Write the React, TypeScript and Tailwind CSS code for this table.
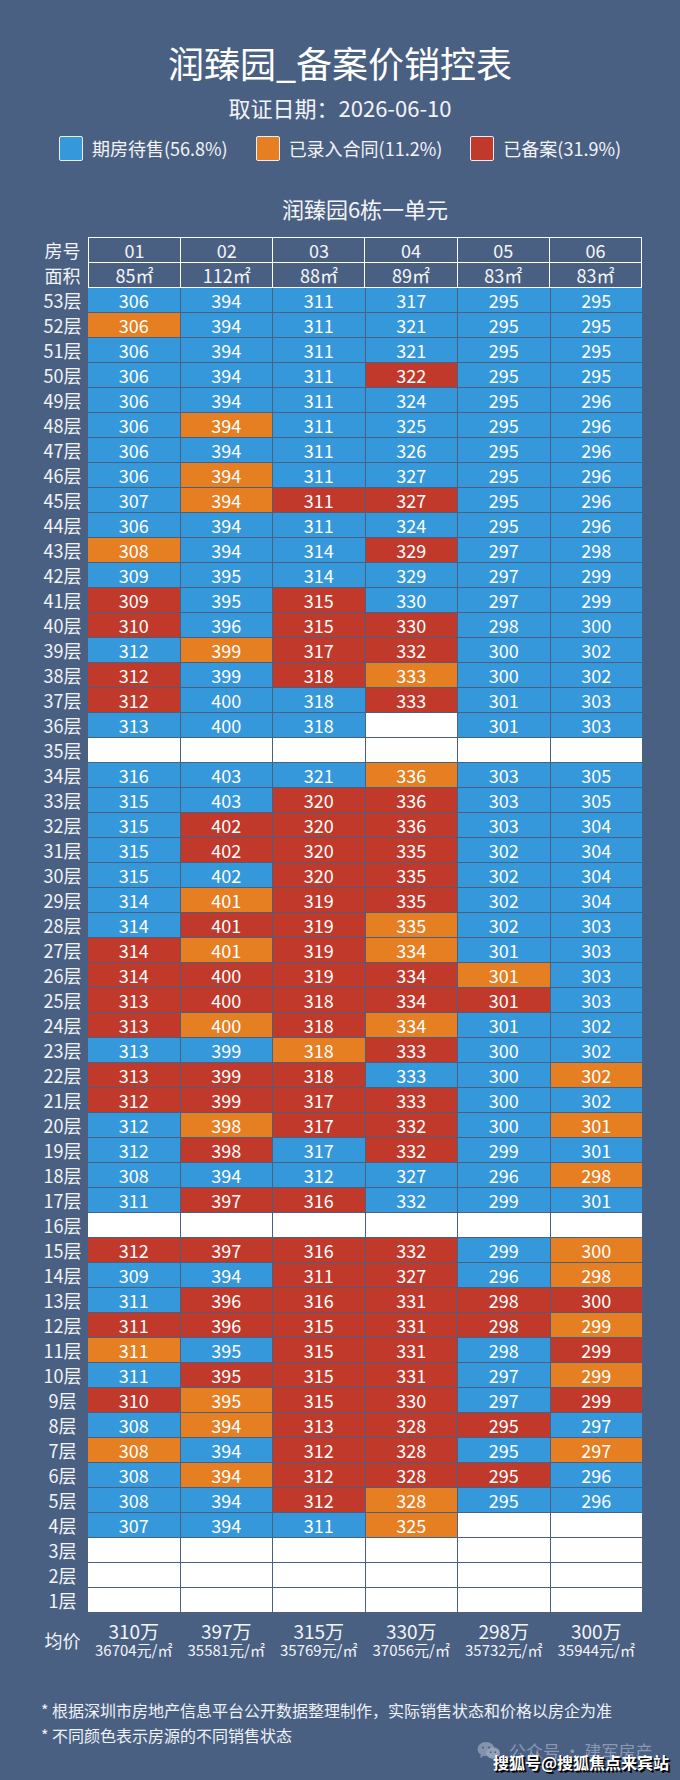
import React from "react";

const ROWS: [number, string][] = [
  [53, "306B 394B 311B 317B 295B 295B"],
  [52, "306O 394B 311B 321B 295B 295B"],
  [51, "306B 394B 311B 321B 295B 295B"],
  [50, "306B 394B 311B 322R 295B 295B"],
  [49, "306B 394B 311B 324B 295B 296B"],
  [48, "306B 394O 311B 325B 295B 296B"],
  [47, "306B 394B 311B 326B 295B 296B"],
  [46, "306B 394O 311B 327B 295B 296B"],
  [45, "307B 394O 311R 327R 295B 296B"],
  [44, "306B 394B 311B 324B 295B 296B"],
  [43, "308O 394B 314B 329R 297B 298B"],
  [42, "309B 395B 314B 329B 297B 299B"],
  [41, "309R 395B 315R 330B 297B 299B"],
  [40, "310R 396B 315R 330R 298B 300B"],
  [39, "312B 399O 317R 332R 300B 302B"],
  [38, "312R 399B 318R 333O 300B 302B"],
  [37, "312R 400B 318B 333R 301B 303B"],
  [36, "313B 400B 318B W 301B 303B"],
  [35, "W W W W W W"],
  [34, "316B 403B 321B 336O 303B 305B"],
  [33, "315B 403B 320R 336R 303B 305B"],
  [32, "315B 402R 320R 336R 303B 304B"],
  [31, "315B 402R 320R 335R 302B 304B"],
  [30, "315B 402B 320R 335R 302B 304B"],
  [29, "314B 401O 319R 335R 302B 304B"],
  [28, "314B 401R 319R 335O 302B 303B"],
  [27, "314R 401O 319R 334O 301B 303B"],
  [26, "314R 400R 319R 334R 301O 303B"],
  [25, "313R 400R 318R 334R 301R 303B"],
  [24, "313R 400O 318R 334O 301B 302B"],
  [23, "313B 399B 318O 333R 300B 302B"],
  [22, "313R 399R 318R 333B 300B 302O"],
  [21, "312R 399R 317R 333R 300B 302B"],
  [20, "312B 398O 317R 332R 300B 301O"],
  [19, "312B 398R 317B 332R 299B 301B"],
  [18, "308B 394B 312B 327B 296B 298O"],
  [17, "311B 397R 316R 332B 299B 301B"],
  [16, "W W W W W W"],
  [15, "312R 397R 316R 332R 299B 300O"],
  [14, "309B 394B 311R 327R 296B 298O"],
  [13, "311B 396R 316R 331R 298R 300R"],
  [12, "311R 396R 315R 331R 298R 299O"],
  [11, "311O 395B 315R 331R 298B 299R"],
  [10, "311B 395R 315R 331R 297B 299O"],
  [9, "310R 395O 315R 330R 297B 299R"],
  [8, "308B 394O 313R 328R 295R 297B"],
  [7, "308O 394B 312R 328R 295B 297O"],
  [6, "308B 394O 312R 328R 295R 296B"],
  [5, "308B 394B 312R 328O 295B 296B"],
  [4, "307B 394B 311B 325O W W"],
  [3, "W W W W W W"],
  [2, "W W W W W W"],
  [1, "W W W W W W"],
];

const COLOR: Record<string, string> = {
  B: "bg-[#3498db]",
  O: "bg-[#e67e22]",
  R: "bg-[#c0392b]",
  W: "bg-white",
};

const UNITS = ["01", "02", "03", "04", "05", "06"];
const AREAS = ["85㎡", "112㎡", "88㎡", "89㎡", "83㎡", "83㎡"];
const AVG = [
  ["310万", "36704元/㎡"],
  ["397万", "35581元/㎡"],
  ["315万", "35769元/㎡"],
  ["330万", "37056元/㎡"],
  ["298万", "35732元/㎡"],
  ["300万", "35944元/㎡"],
];

function Legend({ color, label }: { color: string; label: string }) {
  return (
    <div className="flex items-center gap-[9px]">
      <div className={`w-[24px] h-[25px] rounded-[2px] border border-[#e8eef5] ${color}`} />
      <span className="text-[18px] leading-[25px] text-[#f2f4f7]">{label}</span>
    </div>
  );
}

function WeChatIcon() {
  return (
    <svg width="24" height="20" viewBox="0 0 24 20" className="opacity-60">
      <ellipse cx="9" cy="8" rx="8.5" ry="7" fill="#aab5c8" />
      <path d="M4 13 L3 17 L7.5 14.2 Z" fill="#aab5c8" />
      <ellipse cx="16" cy="12" rx="7" ry="5.8" fill="#c6cfdc" />
      <path d="M19.5 16.5 L21 19.5 L17 17.2 Z" fill="#c6cfdc" />
      <circle cx="6" cy="6.5" r="1.1" fill="#4a6083" />
      <circle cx="12" cy="6.5" r="1.1" fill="#4a6083" />
      <circle cx="13.8" cy="11.2" r="0.9" fill="#4a6083" />
      <circle cx="18.2" cy="11.2" r="0.9" fill="#4a6083" />
    </svg>
  );
}

export default function App() {
  return (
    <div className="relative w-[680px] h-[1780px] overflow-hidden bg-[#4a6083] text-white font-['Noto_Sans_CJK_SC',sans-serif]">
      {/* Title */}
      <div className="pt-[40px] text-center text-[36px] leading-[44px] text-white">润臻园_备案价销控表</div>
      <div className="mt-[8px] text-center text-[22px] leading-[30px] text-[#f2f4f7]">取证日期：2026-06-10</div>

      {/* Legend */}
      <div className="mt-[14px] flex justify-center gap-[28px]">
        <Legend color="bg-[#3498db]" label="期房待售(56.8%)" />
        <Legend color="bg-[#e67e22]" label="已录入合同(11.2%)" />
        <Legend color="bg-[#c0392b]" label="已备案(31.9%)" />
      </div>

      {/* Building title */}
      <div className="mt-[32px] pl-[88px] w-[642px] text-center text-[22px] leading-[30px] text-[#f2f4f7]">润臻园6栋一单元</div>

      {/* Table */}
      <div className="mt-[14px] pl-[37px]">
        {/* Header */}
        <div className="flex">
          <div className="w-[51px] flex flex-col pt-px">
            <div className="h-[25px] leading-[25px] text-center text-[18px] text-[#f2f4f7]">房号</div>
            <div className="h-[25px] leading-[25px] text-center text-[18px] text-[#f2f4f7]">面积</div>
          </div>
          <div className="w-[554px] bg-white p-px grid grid-cols-6 gap-px">
            {UNITS.map((u) => (
              <div key={u} className="h-[24px] bg-[#4a6083] text-center text-[18px] leading-[24px] text-[#f4f6f9]">
                {u}
              </div>
            ))}
            {AREAS.map((a, i) => (
              <div key={i} className="h-[24px] bg-[#4a6083] text-center text-[18px] leading-[24px] text-[#f4f6f9]">
                {a}
              </div>
            ))}
          </div>
        </div>

        {/* Body */}
        <div className="flex flex-col gap-px">
          {ROWS.map(([floor, spec]) => (
            <div key={floor} className="flex">
              <div className="w-[51px] h-[24px] leading-[24px] text-center text-[18px] text-[#f2f4f7]">{floor}层</div>
              <div className="w-[554px] grid grid-cols-6 gap-px">
                {spec.split(" ").map((tok, i) => {
                  const state = tok.slice(-1);
                  const num = tok.length > 1 ? tok.slice(0, -1) : "";
                  return (
                    <div key={i} className={`h-[24px] text-center text-[18px] leading-[24px] text-white ${COLOR[state]}`}>
                      {num}
                    </div>
                  );
                })}
              </div>
            </div>
          ))}
        </div>

        {/* Average */}
        <div className="mt-[9px] flex">
          <div className="w-[51px] flex items-center justify-center text-[18px] text-[#f2f4f7]">均价</div>
          <div className="w-[554px] grid grid-cols-6 gap-px">
            {AVG.map(([p, u], i) => (
              <div key={i} className="flex flex-col items-center text-[#f2f4f7]">
                <div className="text-[19px] leading-[20px]">{p}</div>
                <div className="text-[15px] leading-[18px]">{u}</div>
              </div>
            ))}
          </div>
        </div>
      </div>

      {/* Notes */}
      <div className="mt-[39px] pl-[41px] text-[16px] leading-[25px] text-[#eef1f5]">
        <div>* 根据深圳市房地产信息平台公开数据整理制作，实际销售状态和价格以房企为准</div>
        <div>* 不同颜色表示房源的不同销售状态</div>
      </div>

      {/* Watermarks */}
      <div className="absolute left-[477px] top-[1741px] flex items-center gap-[8px]">
        <WeChatIcon />
        <span className="text-[17px] leading-[20px] text-[#8b98b0]">公众号 · 建军房产</span>
      </div>
      <div className="absolute left-[493px] top-[1751px] text-[16px] leading-[22px] font-bold text-white [text-shadow:1px_1px_0_#000,2px_2px_0_#111]">
        搜狐号@搜狐焦点来宾站
      </div>
    </div>
  );
}
